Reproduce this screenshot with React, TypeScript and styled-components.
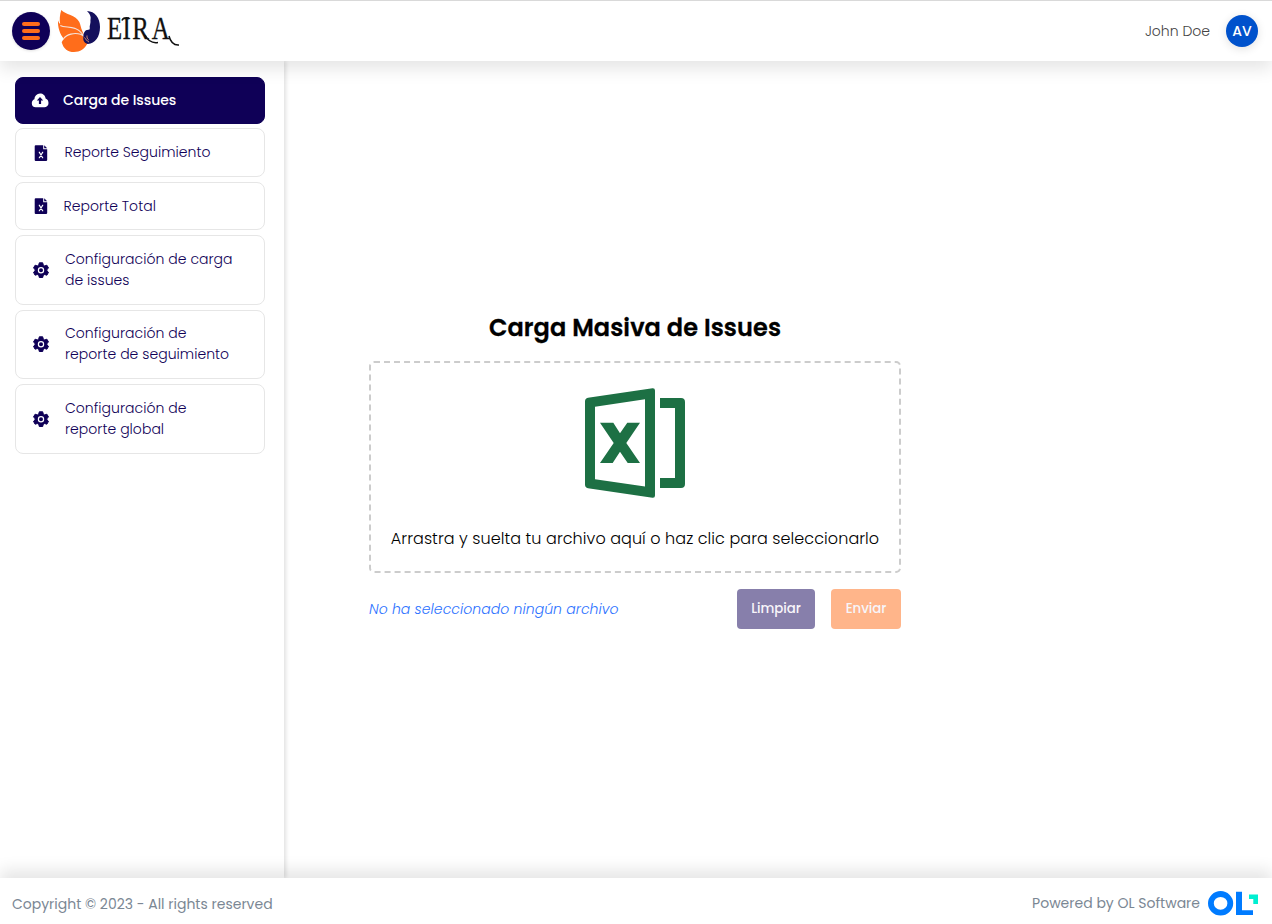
import React from 'react';
import styled, { createGlobalStyle } from 'styled-components';

const GlobalStyle = createGlobalStyle`
  *, *::before, *::after { box-sizing: border-box; }
  body { margin: 0; background: #fff; overflow: hidden; font-family: Poppins, Inter, "Liberation Sans", sans-serif; }
  button { font-family: inherit; }
`;

const navy = '#0f0057';

const Page = styled.div`
  display: flex;
  flex-direction: column;
  height: 924px;
`;

const Header = styled.header`
  position: relative;
  z-index: 2;
  display: flex;
  align-items: center;
  height: 61px;
  padding: 0 14px 0 12px;
  background: #fff;
  border-top: 1px solid #d9d9d9;
  box-shadow: 0 8px 16px rgba(0, 0, 0, 0.1);
`;

const MenuButton = styled.button`
  display: flex;
  flex-direction: column;
  align-items: center;
  justify-content: center;
  gap: 3px;
  width: 38px;
  height: 38px;
  padding: 0;
  border: 0;
  border-radius: 50%;
  background: ${navy};
  box-shadow: 0 1px 3px rgba(0, 0, 0, 0.12);
`;

const MenuBar = styled.span`
  width: 18px;
  height: 4px;
  border-radius: 2px;
  background: #ff6d1b;
`;

const Brand = styled.svg`
  width: 130px;
  height: 50px;
  margin-left: 4px;
`;

const UserName = styled.span`
  margin-left: auto;
  color: #444;
  font-size: 14px;
  font-weight: 300;
  line-height: 21px;
`;

const Avatar = styled.span`
  display: flex;
  align-items: center;
  justify-content: center;
  width: 32px;
  height: 32px;
  margin-left: 16px;
  border-radius: 50%;
  background: #0052cc;
  color: #fff;
  font-size: 14px;
  font-weight: 500;
  box-shadow: 0 2px 10px rgba(0, 0, 0, 0.12);
`;

const Body = styled.div`
  display: flex;
  flex: 1;
`;

const Sidebar = styled.nav`
  display: flex;
  flex-direction: column;
  width: 284px;
  padding: 16px 19px 0 15px;
  box-shadow: 2px 0 4px rgba(0, 0, 0, 0.12);
`;

const NavItem = styled.a<{
  $active?: boolean;
  $lift?: boolean;
  $height: number;
  $gap: number;
  $indent: number;
  $iconGap: number;
}>`
  display: flex;
  align-items: center;
  height: ${(p) => p.$height}px;
  margin-bottom: ${(p) => p.$gap}px;
  padding-left: ${(p) => p.$indent}px;
  padding-bottom: ${(p) => (p.$lift ? 1.5 : 0)}px;
  border: 1px solid ${(p) => (p.$active ? navy : '#e6e6e6')};
  border-radius: 8px;
  background: ${(p) => (p.$active ? navy : '#fff')};
  color: ${(p) => (p.$active ? '#fff' : navy)};
  font-size: 14px;
  font-weight: ${(p) => (p.$active ? 500 : 300)};
  line-height: 21px;
  letter-spacing: ${(p) => (p.$active ? -0.05 : 0.04)}px;
  white-space: pre-line;

  svg {
    margin-right: ${(p) => p.$iconGap}px;
  }
`;

const NavIcon = styled.svg`
  flex: none;
  width: 18px;
  height: 18px;
`;

const Main = styled.main`
  display: flex;
  flex-direction: column;
  flex: 1;
  padding: 249px 0 0 85px;
`;

const Title = styled.h1`
  width: 532px;
  margin: 0 0 15px;
  color: #000;
  font-size: 24px;
  font-weight: 600;
  line-height: 36px;
  letter-spacing: 0.1px;
  text-align: center;
  -webkit-text-stroke: 0.3px #000;
`;

const DropZone = styled.div`
  display: flex;
  flex-direction: column;
  align-items: center;
  width: 532px;
  height: 212px;
  padding-top: 25px;
  border: 2px dashed #ccc;
  border-radius: 5px;
`;

const DropText = styled.p`
  margin: 29px 0 0;
  color: #000;
  font-size: 16px;
  font-weight: 300;
  line-height: 24px;
  letter-spacing: 0.07px;
  white-space: nowrap;
`;

const Actions = styled.div`
  display: flex;
  align-items: center;
  gap: 16px;
  width: 532px;
  margin-top: 16px;
`;

const FileStatus = styled.em`
  margin-right: auto;
  color: #2c72ff;
  font-size: 14px;
  font-weight: 300;
  letter-spacing: 0.07px;
`;

const ActionButton = styled.button<{ $tone: string; $width: number }>`
  width: ${(p) => p.$width}px;
  height: 40px;
  padding: 0;
  border: 0;
  border-radius: 4px;
  background: ${(p) => p.$tone};
  color: #f7f5fa;
  font-size: 13.33px;
  font-weight: 500;
  letter-spacing: -0.06px;
`;

const Footer = styled.footer`
  position: relative;
  z-index: 2;
  display: flex;
  align-items: center;
  justify-content: space-between;
  height: 46px;
  padding: 5px 14px 0 12px;
  background: #fff;
  color: #7b8794;
  font-size: 14px;
  line-height: 21px;
  box-shadow: 0 -8px 16px rgba(0, 0, 0, 0.1);
`;

const Copyright = styled.span`
  padding-top: 2px;
`;

const Powered = styled.span`
  display: flex;
  align-items: center;
  gap: 8px;
`;

const CloudIcon = () => (
  <NavIcon viewBox="0 0 18 18">
    <path fill="#fff" d="M4.8 15.2A4 4 0 0 1 .8 11.2c0-2 1.1-3.4 2.6-4A5.7 5.7 0 0 1 9 1.5c3 0 5.3 2.1 5.6 4.9 1.8.6 2.9 2.2 2.9 4.500A4.2 4.2 0 0 1 13.3 15.2Z" />
    <path fill={navy} d="m9 5 3.2 3.5h-2.100v3.400H7.900V8.500H5.800Z" />
  </NavIcon>
);

const FileIcon = () => (
  <NavIcon viewBox="0 0 18 18">
    <path fill={navy} d="M3.7 1.2h7.5v4h4v10.9a.8.8 0 0 1-.8.8H3.700a1 1 0 0 1-1-1V2.200a1 1 0 0 1 1-1ZM12.200 1.200l3 3h-3Z" />
    <path stroke="#fff" strokeWidth="1.1" fill="none" d="m7.4 8.4 3.2 5.3m0-5.3-3.2 5.3M6.8 8.4h1.2m2.2 0h1M6.8 13.7h1m2.2 0h1.2" />
  </NavIcon>
);

const GearIcon = () => (
  <NavIcon viewBox="0 0 18 18">
    <path
      fill={navy}
      stroke={navy}
      strokeWidth="1"
      strokeLinejoin="round"
      d="M7.3 1.8h3.4l.5 2.2 1.5.9 2.2-.7 1.6 2.9-1.6 1.5v1.2l1.6 1.5-1.6 2.9-2.2-.7-1.5.9-.5 2.1H7.3l-.5-2.1-1.5-.9-2.2.7-1.6-2.9 1.6-1.5V8.6L1.5 7.1l1.6-2.9 2.2.7L6.8 4Z"
    />
    <circle cx="9" cy="9.2" r="2.6" fill="none" stroke="#fff" strokeWidth="1.2" />
  </NavIcon>
);

const items = [
  { label: 'Carga de Issues', Icon: CloudIcon, height: 47, gap: 4, indent: 15, iconGap: 14, active: true },
  { label: 'Reporte Seguimiento', Icon: FileIcon, height: 49, gap: 5, indent: 16, iconGap: 14.5 },
  { label: 'Reporte Total', Icon: FileIcon, height: 48, gap: 5, indent: 15.5, iconGap: 14 },
  { label: 'Configuración de carga\nde issues', Icon: GearIcon, height: 70, gap: 5, indent: 16, iconGap: 15 },
  { label: 'Configuración de\nreporte de seguimiento', Icon: GearIcon, height: 69, gap: 5, indent: 16, iconGap: 15, lift: true },
  { label: 'Configuración de\nreporte global', Icon: GearIcon, height: 70, gap: 0, indent: 16, iconGap: 15 },
];

export default function App() {
  return (
    <Page>
      <GlobalStyle />
      <Header>
        <MenuButton aria-label="Menu">
          <MenuBar />
          <MenuBar />
          <MenuBar />
        </MenuButton>
        <Brand viewBox="54 6 130 50">
          <path
            fill="#ff6d1b"
            d="M61.3 10C65 14.5 76 15 79.3 22c1.4 3 1.5 6 3 9 1 3 2.2 5 4.5 7-.8 1.5-.6 3.5.6 5.5C85 48.5 80 52 74 52c-6 0-10.5-3-12.3-9.8.5-1.2 1.3-2.2 2.3-3.2-4.3-5-6.3-12-6-18.5.5 1.5 1.2 2.7 2.2 3.7-.9-4.6-.4-9.5 1.1-14.2Z"
          />
          <path fill="none" stroke="#f6e3da" strokeWidth="1.1" d="M60.3 25.5c5 3 15-.5 21.2 7.5 2 2.5 3 4 5 5.3M63.5 38.8c3-4.5 11-6.5 17-4.5 2.5.8 4 2.5 6 4.3" />
          <path
            fill="#14105c"
            d="M87 11c8 .2 13 7 13 16 0 10-5 16.5-12 17-3-.5-5-3-4.7-6 .2-2.5 0-5 1.7-6.8 1.2-1.700 3-1 4.500-1.700.8-1.500-.3-3 .5-4.500l.5-3c-.3-2.300.4-3.500.1-5-.6-2.800-1.600-4-3.600-6Z"
          />
          <path fill="none" stroke="#f6a47a" strokeWidth="0.8" d="M84.5 37.5c1.5 1.5 2 3.5 4.5 4.5M87 35.5c-.3 2 .3 3.500 1.800 4.500" />
          <text
            transform="translate(107 38.5) scale(0.8 1)"
            x="0 19.5 31.5 56"
            y="0"
            fontFamily="Liberation Serif, serif"
            fontSize="31"
            fill="#111"
            stroke="#111"
            strokeWidth="0.3"
          >
            EIRA
          </text>
          <path stroke="#111" strokeWidth="1.5" fill="none" d="M122 20.5c1-3 4-3 7-2.500M145 35c3 6 7 8.500 13 7.500M169 36c1.500 6 4 9.500 10 9" />
        </Brand>
        <UserName>John Doe</UserName>
        <Avatar>AV</Avatar>
      </Header>
      <Body>
        <Sidebar>
          {items.map(({ label, Icon, height, gap, indent, iconGap, active, lift }) => (
            <NavItem key={label} $active={active} $lift={lift} $height={height} $gap={gap} $indent={indent} $iconGap={iconGap}>
              <Icon />
              {label}
            </NavItem>
          ))}
        </Sidebar>
        <Main>
          <Title>Carga Masiva de Issues</Title>
          <DropZone>
            <svg width="100" height="110" viewBox="585 388 100 110">
              <path
                fill="#1d7044"
                fillRule="evenodd"
                d="M588 397.7 652.5 388.2Q655 388 655 390.5V495.5Q655 498 652.5 497.7L588 488.2Q585 487.8 585 484.5V401.5Q585 398.2 588 397.7ZM595 406.7V479.3L645 486.5V399.3Z"
              />
              <path fill="#1d7044" d="M600 422.7h13.3l6.7 10.6 7.3-10.6H640L626.3 443 640 463h-12.3L620 451.7 612.7 463H600l13.7-20ZM660 398h21q4 0 4 4v82q0 4-4 4h-21v-10h15v-70h-15Z" />
            </svg>
            <DropText>Arrastra y suelta tu archivo aquí o haz clic para seleccionarlo</DropText>
          </DropZone>
          <Actions>
            <FileStatus>No ha seleccionado ningún archivo</FileStatus>
            <ActionButton $tone="#877fab" $width={78}>Limpiar</ActionButton>
            <ActionButton $tone="#ffb58a" $width={70}>Enviar</ActionButton>
          </Actions>
        </Main>
      </Body>
      <Footer>
        <Copyright>Copyright © 2023 - All rights reserved</Copyright>
        <Powered>
          Powered by OL Software
          <svg width="50" height="25" viewBox="0 0 50 25">
            <ellipse cx="12.6" cy="12.3" rx="9.7" ry="9.3" fill="none" stroke="#007bff" strokeWidth="5.8" />
            <path fill="#007bff" d="M28 .7h6v18.600H45v4.700H28Z" />
            <path fill="#00efd1" d="M41 3.500h9v9.500h-4.700V8H41Z" />
          </svg>
        </Powered>
      </Footer>
    </Page>
  );
}
